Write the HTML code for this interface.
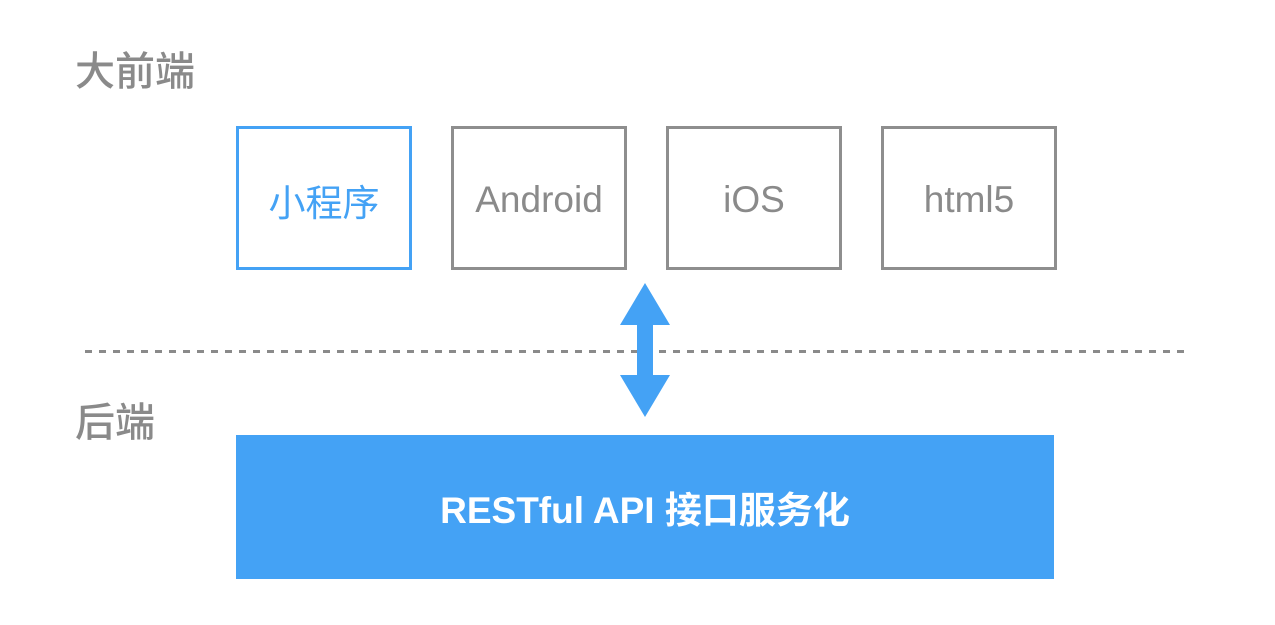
<!DOCTYPE html>
<html><head><meta charset="utf-8"><style>
body{margin:0;width:1275px;height:625px;background:#fff;position:relative;overflow:hidden;font-family:"Liberation Sans","Noto Sans CJK SC",sans-serif}
.t{position:absolute;color:#8a8a8a;font-size:40px;font-weight:500;line-height:1}
.b{position:absolute;top:126px;width:170px;height:138px;border:3px solid #8e8e8e;display:flex;align-items:center;justify-content:center;font-size:37px;color:#8a8a8a;box-sizing:content-box;padding-top:4px;height:134px}
.dash{position:absolute;left:85px;top:350px;width:1100px;height:3px;background:repeating-linear-gradient(90deg,#8a8a8a 0 7px,transparent 7px 14px)}
.api{position:absolute;left:236px;top:435px;width:818px;height:144px;background:#44a2f5;color:#fff;font-size:37px;font-weight:bold;display:flex;align-items:center;justify-content:center}
</style></head><body>
<div class="t" style="left:75px;top:52px">大前端</div>
<div class="t" style="left:75px;top:403px">后端</div>
<div class="b" style="left:236px;border-color:#44a2f5;color:#44a2f5">小程序</div>
<div class="b" style="left:451px">Android</div>
<div class="b" style="left:666px">iOS</div>
<div class="b" style="left:881px">html5</div>
<div class="dash"></div>
<svg style="position:absolute;left:0;top:0" width="1275" height="625"><path d="M645 283 L670 325 L653 325 L653 375 L670 375 L645 417 L620 375 L637 375 L637 325 L620 325 Z" fill="#44a2f5"/></svg>
<div class="api">RESTful API 接口服务化</div>
</body></html>
